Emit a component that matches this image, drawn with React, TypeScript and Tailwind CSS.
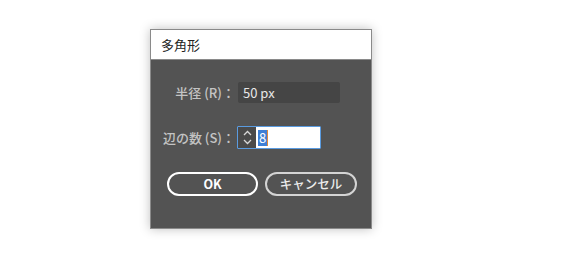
import React from 'react';

const font = { fontFamily: '"Noto Sans CJK JP", "Noto Sans", sans-serif' };

const App: React.FC = () => {
  return (
    <div className="w-[564px] h-[278px] bg-white pl-[150px] pt-[29px]" style={font}>
      <div className="w-[222px] h-[200px] flex flex-col border border-[#8a8a8a] shadow-[0_0_10px_rgba(0,0,0,0.25)]">
        <div className="h-[30px] shrink-0 bg-white border-b border-[#8a8a8a] flex items-center px-[10px] text-[13px] text-[#222]">
          多角形
        </div>
        <div className="flex-1 bg-[#535353] pt-[22px]">
          <div className="flex items-center h-[21px]">
            <div className="w-[86px] text-right pr-[2px] text-[13px] font-medium text-[#c4c4c4] leading-none">半径 (R)：</div>
            <div className="ml-[1px] w-[102px] h-[21px] rounded-[2px] bg-[#454545] flex items-center pl-[5px] text-[13px] text-[#e8e8e8]">
              50 px
            </div>
          </div>
          <div className="flex items-center h-[23px] mt-[23px]">
            <div className="w-[86px] text-right pr-[2px] text-[13px] font-medium text-[#c4c4c4] leading-none">辺の数 (S)：</div>
            <div className="flex h-[23px] border border-[#5a9be0] rounded-[1px]">
              <div className="w-[18px] h-full bg-[#4a4a4a] flex flex-col items-center justify-between py-[3px]">
                <svg width="9" height="6" viewBox="0 0 9 6"><path d="M1 5 L4.5 1.5 L8 5" stroke="#d8d8d8" strokeWidth="1.3" fill="none" /></svg>
                <svg width="9" height="6" viewBox="0 0 9 6"><path d="M1 1 L4.5 4.5 L8 1" stroke="#d8d8d8" strokeWidth="1.3" fill="none" /></svg>
              </div>
              <div className="w-[64px] h-full bg-white flex items-center pl-[2px]">
                <span className="bg-[#3d7fd6] text-white text-[13px] leading-[16px] px-[1px] border-r border-[#e08a3a]">8</span>
              </div>
            </div>
          </div>
          <div className="flex gap-[7px] mt-[23px] pl-[16px]">
            <button className="w-[91px] h-[24px] rounded-full border-2 border-white text-[12.5px] font-semibold text-white flex items-center justify-center">
              OK
            </button>
            <button className="w-[92px] h-[24px] rounded-full border-2 border-[#d4d4d4] text-[12.5px] font-medium text-[#ececec] flex items-center justify-center">
              キャンセル
            </button>
          </div>
        </div>
      </div>
    </div>
  );
};

export default App;
